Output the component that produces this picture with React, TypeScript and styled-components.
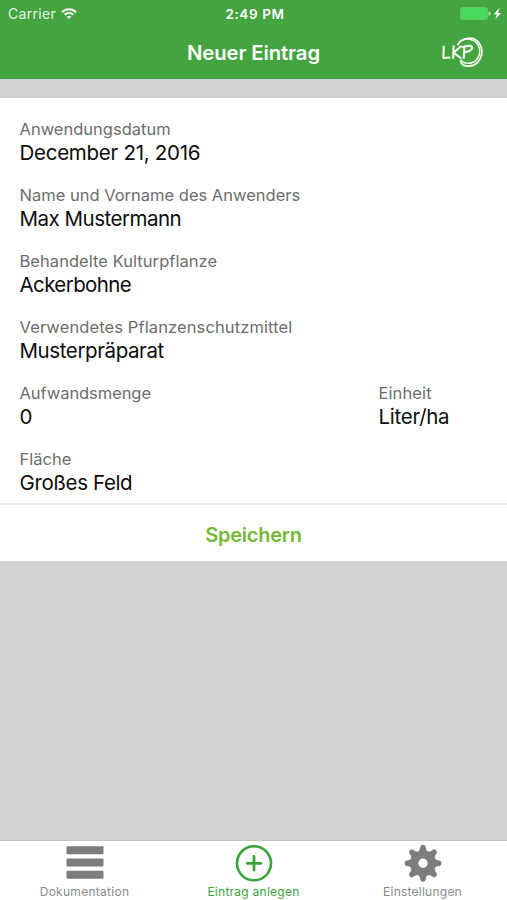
import React from "react";
import styled, { createGlobalStyle } from "styled-components";

const GlobalStyle = createGlobalStyle`
  * { box-sizing: border-box; }
  html, body { margin: 0; padding: 0; }
  body { font-family: Inter, "Liberation Sans", sans-serif; }
`;

const Screen = styled.div`
  display: flex;
  flex-direction: column;
  width: 507px;
  height: 900px;
  overflow: hidden;
  background: #d0d2d3;
`;

const Header = styled.header`
  height: 79px;
  flex: none;
  background: #43a440;
  color: #fff;
`;

const StatusBar = styled.div`
  display: grid;
  grid-template-columns: 1fr auto 1fr;
  align-items: center;
  height: 27px;
  padding: 0 5px 0 8px;
`;

const Carrier = styled.div`
  display: flex;
  align-items: center;
  gap: 5px;
  color: #e6f5e2;
`;

const Battery = styled.div`
  display: flex;
  justify-content: flex-end;
`;

const NavBar = styled.div`
  display: grid;
  grid-template-columns: 1fr auto 1fr;
  align-items: center;
  height: 50px;
  padding: 0 23px;
`;

const Logo = styled.svg`
  justify-self: end;
`;

const Text = styled.span<{ $size: number; $spacing?: number; $weight?: number }>`
  font-size: ${(p) => p.$size}px;
  letter-spacing: ${(p) => p.$spacing ?? 0}px;
  font-weight: ${(p) => p.$weight ?? 400};
  white-space: nowrap;
`;

const Form = styled.main`
  flex: none;
  height: 407px;
  margin-top: 19px;
  padding: 20px 20px 0 19.5px;
  background: #fff;
  border-bottom: 2px solid #eaebeb;
`;

const Row = styled.div`
  display: grid;
  grid-template-columns: 359px 1fr;
  height: 66px;
`;

const Label = styled(Text)`
  display: block;
  line-height: 22px;
  color: #6d6d6d;
`;

const Value = styled(Text)`
  display: block;
  line-height: 26px;
  color: #0c0c0c;
`;

const SaveButton = styled.button`
  flex: none;
  height: 56px;
  padding: 4px 0 0;
  border: 0;
  background: #fff;
  color: #75ba37;
  font-family: inherit;
`;

const TabBar = styled.nav`
  display: grid;
  grid-template-columns: repeat(3, 1fr);
  height: 60px;
  margin-top: auto;
  background: #fff;
  border-top: 1px solid #c4c6c6;
`;

const Tab = styled.div<{ $active?: boolean }>`
  display: flex;
  flex-direction: column;
  align-items: center;
  padding-top: 3px;
  line-height: 15px;
  color: ${(p) => (p.$active ? "#3aa43b" : "#8a8a8a")};
`;

const TabIcon = styled.svg`
  display: block;
  width: 40px;
  height: 40px;
`;

type FieldProps = {
  label: string;
  value: string;
  labelSpacing?: number;
  valueSpacing?: number;
};

const Field = ({ label, value, labelSpacing, valueSpacing }: FieldProps) => (
  <div>
    <Label $size={16.5} $spacing={labelSpacing}>{label}</Label>
    <Value $size={20.5} $spacing={valueSpacing}>{value}</Value>
  </div>
);

const teeth = [0, 45, 90, 135, 180, 225, 270, 315];

export default function App() {
  return (
    <Screen>
      <GlobalStyle />
      <Header>
        <StatusBar>
          <Carrier>
            <Text $size={14} $spacing={0.3}>Carrier</Text>
            <svg width="16" height="12" viewBox="0 0 16 12" fill="none" stroke="#fff" strokeWidth="2">
              <path d="M1 4.2C5 .2 11 .2 15 4.2" />
              <path d="M3.6 6.8C6.2 4.3 9.8 4.3 12.4 6.8" />
              <path d="M8 11 5.6 8.6Q8 6.7 10.4 8.6Z" fill="#fff" stroke="none" />
            </svg>
          </Carrier>
          <Text $size={13.5} $weight={600} $spacing={0.6}>2:49 PM</Text>
          <Battery>
            <svg width="43" height="15" viewBox="0 0 43 15">
              <rect x="1.5" y="1.5" width="27" height="12" rx="2" fill="#48da5d" stroke="#68c267" />
              <path d="M29.6 5.2q2 .3 2 2.3t-2 2.3z" fill="#b8edba" />
              <path d="M40.4 2 34.8 8.2h2.9l-1.3 5L42 7h-3z" fill="#fff" />
            </svg>
          </Battery>
        </StatusBar>
        <NavBar>
          <span />
          <Text $size={20.3} $weight={600} $spacing={-0.1}>Neuer Eintrag</Text>
          <Logo width="43" height="34" viewBox="0 0 43 34" fill="none" stroke="#f4fbf0" strokeLinecap="round" strokeLinejoin="round">
            <path d="M2.8 11.5 2.3 23l6.2-.5M12.6 11.2 12.2 23M20 11.4l-7.6 6.3 7.2 5.3M23.4 12.2 22.8 23M22 11.9c4-1.5 9.4-1.6 9.2 1-.2 2.7-5 4.2-7.8 4.2" strokeWidth="2.1" />
            <path d="M17 9.5C20.5 2.5 33 .3 38.4 8.4 44 17 39.4 30 28.5 31c-4.4.3-8-1.5-8.9-4.8" strokeWidth="1.8" />
            <path d="M19.5 6.2C26 1.8 34.4 4.4 37.4 10.6c4 8.5-1.9 18-10.4 17.7-3-.1-5.5-1-6.6-3.3" strokeWidth="1.5" />
          </Logo>
        </NavBar>
      </Header>
      <Form>
        <Row><Field label="Anwendungsdatum" value="December 21, 2016" valueSpacing={-0.27} /></Row>
        <Row><Field label="Name und Vorname des Anwenders" value="Max Mustermann" valueSpacing={-0.5} /></Row>
        <Row><Field label="Behandelte Kulturpflanze" value="Ackerbohne" labelSpacing={0.05} valueSpacing={-0.6} /></Row>
        <Row><Field label="Verwendetes Pflanzenschutzmittel" value="Musterpräparat" labelSpacing={0.11} valueSpacing={-0.4} /></Row>
        <Row>
          <Field label="Aufwandsmenge" value="0" labelSpacing={-0.07} />
          <Field label="Einheit" value="Liter/ha" labelSpacing={0.1} valueSpacing={-0.28} />
        </Row>
        <Row><Field label="Fläche" value="Großes Feld" valueSpacing={-0.38} /></Row>
      </Form>
      <SaveButton><Text $size={20} $weight={600} $spacing={-0.25}>Speichern</Text></SaveButton>
      <TabBar>
        <Tab>
          <TabIcon viewBox="0 0 40 40" fill="#7d7d7d">
            <rect x="1.5" y="2.3" width="37" height="8" rx="1" />
            <rect x="1.5" y="14.6" width="37" height="8" rx="1" />
            <rect x="1.5" y="26.8" width="37" height="8" rx="1" />
          </TabIcon>
          <Text $size={12} $spacing={0.28}>Dokumentation</Text>
        </Tab>
        <Tab $active>
          <TabIcon viewBox="0 0 40 40" fill="none" stroke="#3aa43b">
            <circle cx="20" cy="19.3" r="17" strokeWidth="2.6" />
            <path d="M20 12.4v13.8M13.1 19.3h13.8" strokeWidth="2.8" strokeLinecap="round" />
          </TabIcon>
          <Text $size={12} $spacing={0.26}>Eintrag anlegen</Text>
        </Tab>
        <Tab>
          <TabIcon viewBox="0 0 40 40" fill="#7d7d7d">
            <g transform="translate(20 19.3)">
              <circle r="8.8" fill="none" stroke="#7d7d7d" strokeWidth="8.2" />
              {teeth.map((a) => (
                <path key={a} transform={`rotate(${a})`} d="M-4.8-11.8Q-2.8-13.2-2.7-16.2Q-2.4-18.5 0-18.5T2.7-16.2Q2.8-13.2 4.8-11.8Z" />
              ))}
            </g>
          </TabIcon>
          <Text $size={12} $spacing={0.24}>Einstellungen</Text>
        </Tab>
      </TabBar>
    </Screen>
  );
}
